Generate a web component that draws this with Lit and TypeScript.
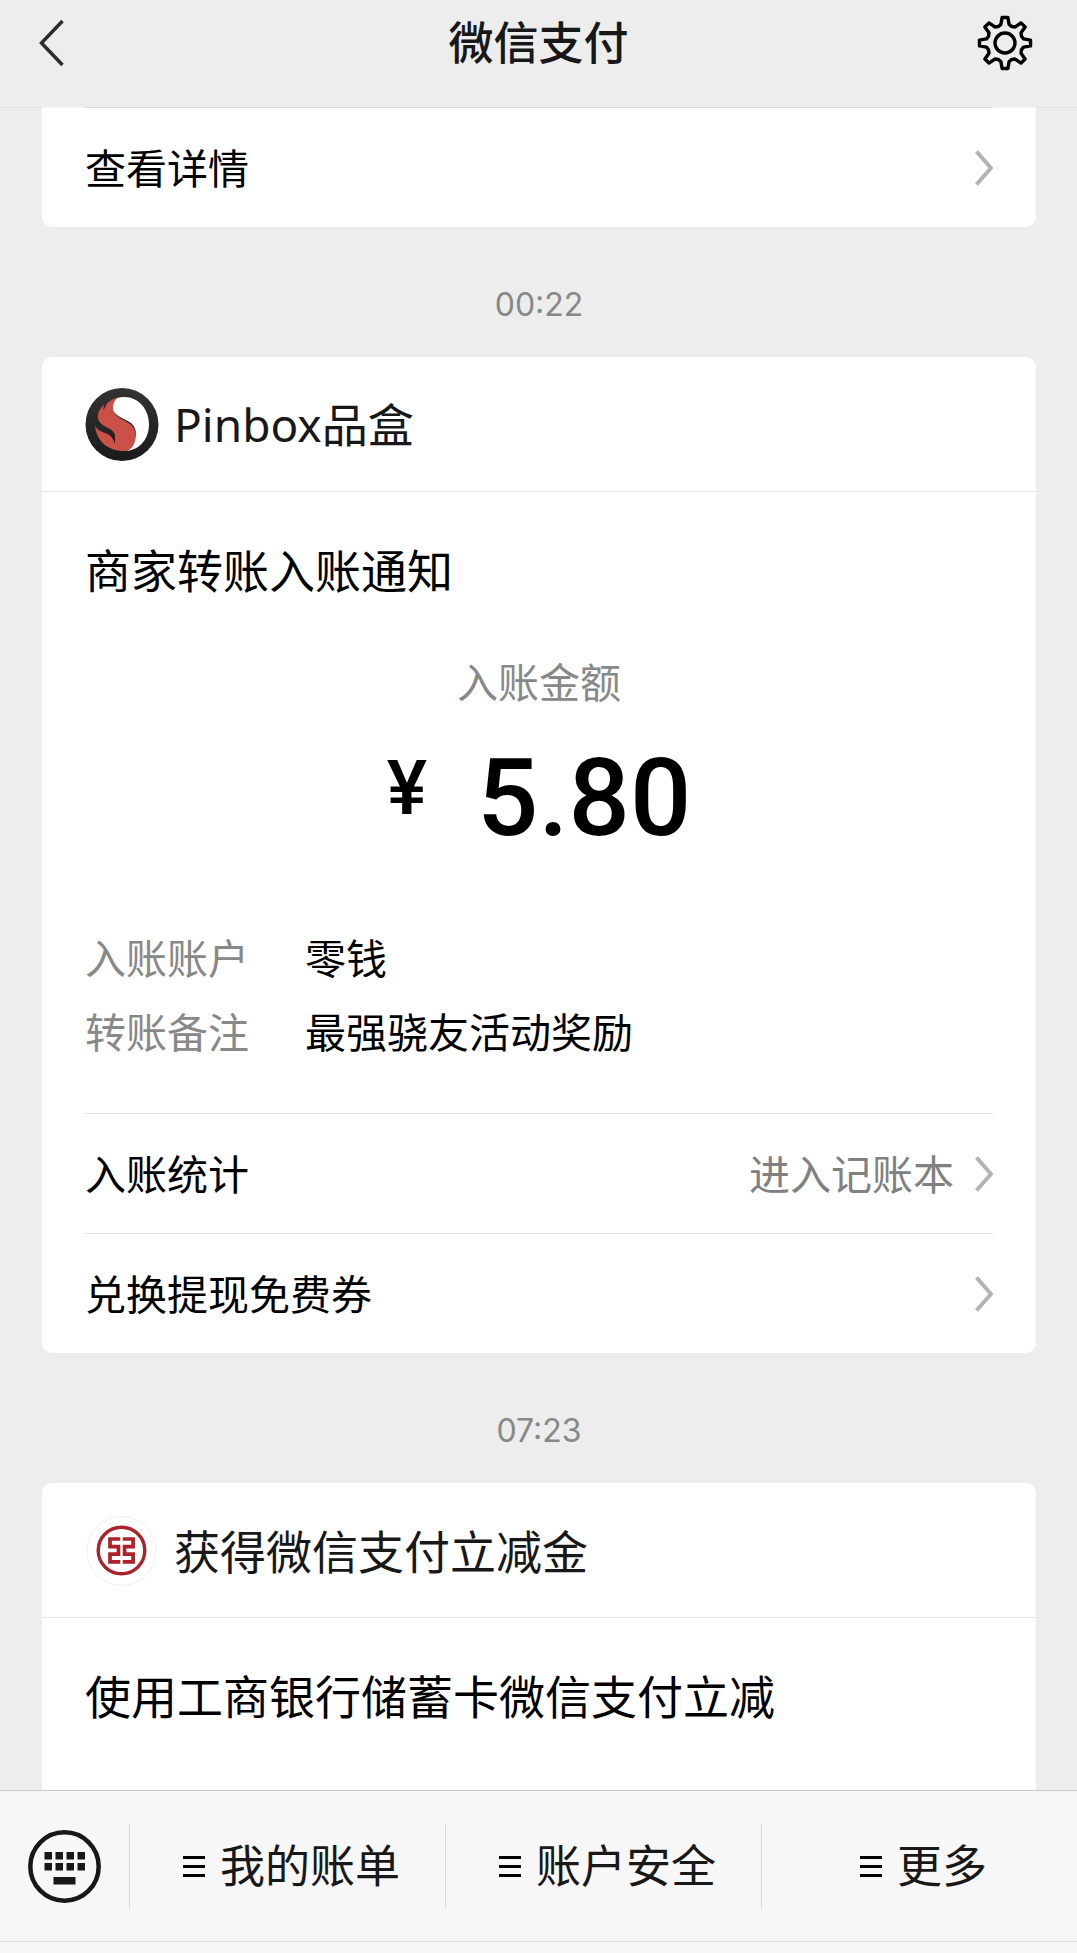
import { LitElement, html, css, svg } from "lit";
import { customElement, property } from "lit/decorators.js";

const chevron = html`<svg class="chevron" viewBox="0 0 18 36" width="18" height="36" aria-hidden="true">
  <path d="M1.5 1.5 L16 18 L1.5 34.5" fill="none" stroke="#b2b2b2" stroke-width="4" stroke-linejoin="round" />
</svg>`;

const pinboxLogo = html`<svg viewBox="0 0 74 74" width="74" height="74" aria-hidden="true">
  <defs>
    <linearGradient id="ring" x1="0" y1="0" x2="0" y2="1">
      <stop offset="0" stop-color="#333334" />
      <stop offset="1" stop-color="#1a1a1b" />
    </linearGradient>
  </defs>
  <circle cx="37" cy="37.500" r="36.500" fill="url(#ring)" />
  <path d="M32 11 C50 6 64 20 64 37 C64 51 56 62 42 64 C52 54 54 43 46 36 C39 31 29 29 27 21 C27 16 29 12 32 11 Z" fill="#fff" />
  <path d="M33 10.500 C26 12 21 16 20 21 L18 23 L19 17.500 C14 22 11 29 14 34 C18 41 28 40 30 48 L30 57 C28 51 26 48 20 46 C15 44 11 42 10 38 C11 54 23 65 42 64 C50 61 52 50 50 44 C48 36 38 34 32 29 C26 24 27 15 33 10.500 Z" fill="#cb5048" />
</svg>`;

const icbcLogo = html`<svg viewBox="0 0 74 74" width="74" height="74" aria-hidden="true">
  <circle cx="36.500" cy="38" r="34.500" fill="#fff" stroke="#f0f0f0" stroke-width="1" />
  <circle cx="36.500" cy="37.500" r="23.300" fill="none" stroke="#ab2328" stroke-width="3.400" />
  <path d="M35.300 26 H25 V33.700 H33.500 V41.200 H25 V48.900 H35.300 M37.800 26 H48.100 V33.700 H39.600 V41.200 H48.100 V48.900 H37.800" fill="none" stroke="#ab2328" stroke-width="3.700" />
</svg>`;

function gearPath(): string {
  const points: string[] = [];
  for (let i = 0; i < 8; i++) {
    const base = (i * 45 - 90) * (Math.PI / 180);
    const corners: Array<[number, number]> = [[-22.5, 17.8], [-12.5, 19], [-6.5, 25.7], [6.5, 25.7], [12.5, 19]];
    for (const [deg, r] of corners) {
      const a = base + deg * (Math.PI / 180);
      points.push(`${(28 + r * Math.cos(a)).toFixed(2)} ${(28 + r * Math.sin(a)).toFixed(2)}`);
    }
  }
  return `M${points.join(" L")} Z`;
}

@customElement("pay-link-row")
export class PayLinkRow extends LitElement {
  @property() label = "";
  @property() note = "";

  static styles = css`
    :host { display: block; border-top: 1px solid #e2e2e2; }
    .row {
      display: flex;
      align-items: center;
      height: 119px;
      color: #000;
      font-size: 41px;
      line-height: 60px;
      text-decoration: none;
    }
    .label, .note { padding-bottom: 4px; }
    .label { flex: 1; }
    .note { color: #808080; margin-right: 21px; }
    .chevron { display: block; flex: none; }
  `;

  render() {
    return html`<a class="row" href="#">
      <span class="label">${this.label}</span>
      ${this.note ? html`<span class="note">${this.note}</span>` : ""}
      ${chevron}
    </a>`;
  }
}

@customElement("pay-menu-item")
export class PayMenuItem extends LitElement {
  @property() label = "";

  static styles = css`
    :host { display: flex; flex: 1; align-items: center; height: 86px; border-left: 1px solid #dcdcdc; }
    .item {
      display: flex;
      flex: 1;
      align-items: center;
      justify-content: center;
      gap: 15px;
      margin: 0;
      padding: 0 0 0 8px;
      border: 0;
      background: none;
      color: #181818;
      font: inherit;
      font-size: 45px;
      line-height: 64px;
    }
    .bars { display: block; }
    .label { padding-bottom: 4px; }
  `;

  render() {
    return html`<button class="item" type="button">
      <svg class="bars" viewBox="0 0 22 22" width="22" height="22" aria-hidden="true">
        <path d="M0 2.500 H22 M0 11.500 H22 M0 20.500 H22" stroke="#000" stroke-width="3" />
      </svg>
      <span class="label">${this.label}</span>
    </button>`;
  }
}

@customElement("app-root")
export class AppRoot extends LitElement {
  static styles = css`
    :host {
      display: flex;
      flex-direction: column;
      height: 100vh;
      overflow: hidden;
      background: #ededed;
      color: #000;
      font-family: "Noto Sans CJK SC", sans-serif;
    }
    .top {
      position: relative;
      display: grid;
      grid-template-columns: 1fr auto 1fr;
      align-items: center;
      flex: none;
      height: 107px;
      box-sizing: border-box;
      padding: 0 36px 22px;
      box-shadow: 0 1px 0 rgba(0, 0, 0, 0.04);
      color: #181818;
    }
    .icon-button { display: block; margin: 0; padding: 0; border: 0; background: none; }
    .icon-button svg { display: block; }
    .back { justify-self: start; }
    .settings { justify-self: end; margin-right: 8px; }
    .page-title { margin: 0; padding-bottom: 4px; font-size: 45px; line-height: 64px; font-weight: 500; }
    .feed { display: flex; flex-direction: column; flex: 1; min-height: 0; overflow: hidden; padding: 0 41px 0 42px; }
    .card { flex: none; border-radius: 10px; background: #fff; }
    .card.clipped-top { border-radius: 0 0 10px 10px; }
    .card.clipped-bottom { flex: 1 0 auto; border-radius: 10px 10px 0 0; }
    .rows { padding: 0 43px; }
    .time {
      display: flex;
      align-items: center;
      justify-content: center;
      flex: none;
      height: 130px;
      box-sizing: border-box;
      padding-top: 25px;
      color: #888;
      font-family: Inter, sans-serif;
      font-size: 32px;
      line-height: 40px;
    }
    .sender {
      display: flex;
      align-items: center;
      gap: 15px;
      height: 134px;
      padding: 0 43px;
      border-bottom: 1px solid #e5e5e5;
      color: #181818;
      font-size: 46px;
      line-height: 66px;
    }
    .sender svg { display: block; flex: none; }
    .name { padding-bottom: 3px; }
    .latin { font-family: "Noto Sans", sans-serif; }
    .heading { margin: 0; padding: 42px 43px 0; font-size: 46px; line-height: 68px; font-weight: 400; }
    .caption { margin: 48px 0 0; color: #888; font-size: 41px; line-height: 60px; text-align: center; }
    .amount {
      display: flex;
      justify-content: center;
      align-items: flex-start;
      gap: 50px;
      margin: 0;
      padding-top: 38px;
      font-family: Roboto, sans-serif;
      font-weight: 500;
    }
    .currency { font-size: 76px; line-height: 80px; }
    .figure { font-size: 108px; line-height: 100px; }
    .details {
      display: grid;
      grid-template-columns: auto 1fr;
      gap: 14px 56px;
      margin: 0;
      padding: 78px 43px 53px;
      font-size: 41px;
      line-height: 60px;
    }
    .details dt { color: #888; }
    .details dd { margin: 0; }
    .bottom {
      display: flex;
      align-items: center;
      flex: none;
      height: 150px;
      border-top: 1px solid #c8c8c8;
      background: #f7f7f7;
    }
    .keyboard { padding: 0 28px; }
    .edge { flex: none; height: 11px; border-top: 1px solid #dcdcdc; background: #f7f7f7; }
  `;

  render() {
    return html`
      <header class="top">
        <button class="icon-button back" type="button" aria-label="返回">
          <svg viewBox="0 0 30 48" width="30" height="48">
            <path d="M26.500 2 L5.500 24 L26.500 46" fill="none" stroke="#2c2c2c" stroke-width="3.500" />
          </svg>
        </button>
        <h1 class="page-title">微信支付</h1>
        <button class="icon-button settings" type="button" aria-label="设置">
          <svg viewBox="0 0 56 56" width="56" height="56" fill="none" stroke="#000" stroke-width="3.400" stroke-linejoin="round">
            <path d=${gearPath()} />
            <circle cx="28" cy="28" r="10" />
          </svg>
        </button>
      </header>

      <main class="feed">
        <section class="card clipped-top">
          <div class="rows"><pay-link-row label="查看详情"></pay-link-row></div>
        </section>

        <time class="time">00:22</time>

        <article class="card">
          <header class="sender">${pinboxLogo}<span class="name"><span class="latin">Pinbox</span>品盒</span></header>
          <h2 class="heading">商家转账入账通知</h2>
          <p class="caption">入账金额</p>
          <p class="amount"><span class="currency">¥</span><span class="figure">5.80</span></p>
          <dl class="details">
            <dt>入账账户</dt><dd>零钱</dd>
            <dt>转账备注</dt><dd>最强骁友活动奖励</dd>
          </dl>
          <div class="rows">
            <pay-link-row label="入账统计" note="进入记账本"></pay-link-row>
            <pay-link-row label="兑换提现免费券"></pay-link-row>
          </div>
        </article>

        <time class="time">07:23</time>

        <article class="card clipped-bottom">
          <header class="sender">${icbcLogo}<span class="name">获得微信支付立减金</span></header>
          <h2 class="heading">使用工商银行储蓄卡微信支付立减</h2>
        </article>
      </main>

      <nav class="bottom">
        <button class="icon-button keyboard" type="button" aria-label="键盘">
          <svg viewBox="0 0 73 73" width="73" height="73" fill="#181818">
            <circle cx="36.500" cy="36.500" r="34.200" fill="none" stroke="#181818" stroke-width="4.500" />
            ${[0, 1].map((r) => [0, 1, 2, 3].map((c) => svg`<rect x=${16.5 + c * 11} y=${22 + r * 11} width="7.500" height="7.500" />`))}
            <rect x="25.500" y="47" width="22" height="7.500" />
          </svg>
        </button>
        <pay-menu-item label="我的账单"></pay-menu-item>
        <pay-menu-item label="账户安全"></pay-menu-item>
        <pay-menu-item label="更多"></pay-menu-item>
      </nav>
      <div class="edge"></div>
    `;
  }
}
